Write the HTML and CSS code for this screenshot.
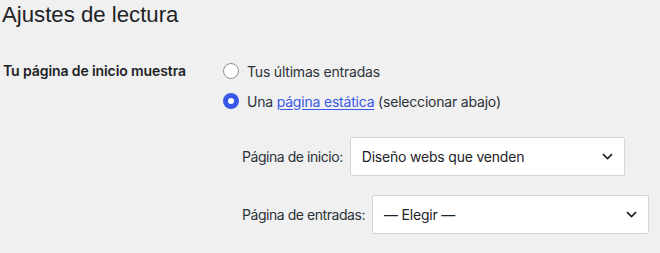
FILE: index.html
```html
<!DOCTYPE html>
<html lang="es">
<head>
<meta charset="utf-8">
<title>Ajustes de lectura</title>
<link rel="stylesheet" href="styles.css">
</head>
<body>
<h1 class="title">Ajustes de lectura</h1>
<div class="row">
  <div class="row-label">Tu página de inicio muestra</div>
  <div class="row-field">
    <label class="radio"><span class="radio-dot"></span><span>Tus últimas entradas</span></label>
    <label class="radio"><span class="radio-dot checked"></span><span>Una <a href="#" class="link">página estática</a> (seleccionar abajo)</span></label>
    <ul class="pages">
      <li class="page-item">
        <span class="page-label">Página de inicio:</span>
        <div class="select select-home"><span>Diseño webs que venden</span>
          <svg class="chevron" width="11" height="7" viewBox="0 0 11 7"><path d="M1 1.2 L5.5 5.5 L10 1.2" fill="none" stroke="#1d2327" stroke-width="1.7"/></svg>
        </div>
      </li>
      <li class="page-item">
        <span class="page-label">Página de entradas:</span>
        <div class="select select-posts"><span>— Elegir —</span>
          <svg class="chevron" width="11" height="7" viewBox="0 0 11 7"><path d="M1 1.2 L5.5 5.5 L10 1.2" fill="none" stroke="#1d2327" stroke-width="1.7"/></svg>
        </div>
      </li>
    </ul>
  </div>
</div>
</body>
</html>
```
FILE: styles.css
```css
html, body {
  margin: 0;
  padding: 0;
  background: #f0f0f1;
}
body {
  padding-left: 2px;
  font-family: Inter, "Liberation Sans", sans-serif;
  color: #1d2327;
  font-size: 14px;
  letter-spacing: -0.2px;
}
.title {
  margin: 0;
  font-family: "Liberation Sans", Arial, sans-serif;
  font-size: 22.2px;
  font-weight: 400;
  letter-spacing: 0;
  line-height: 30px;
  color: #1d2327;
}
.row {
  display: flex;
  margin-top: 26px;
}
.row-label {
  width: 220px;
  padding-left: 1px;
  font-weight: 600;
  letter-spacing: -0.1px;
  line-height: 30px;
  height: 30px;
}
.row-field {
  display: flex;
  flex-direction: column;
}
.radio {
  display: flex;
  align-items: center;
  gap: 8px;
  height: 30px;
  color: #2c3338;
}
.radio-dot {
  box-sizing: border-box;
  width: 16px;
  height: 16px;
  border-radius: 50%;
  border: 1px solid #8c8f94;
  background: #fff;
}
.radio-dot.checked {
  border: 5px solid #3858e9;
}
.link {
  color: #3858e9;
  text-decoration: underline;
  text-underline-offset: 2px;
}
.pages {
  list-style: none;
  margin: 21px 0 0 0;
  padding: 0 0 0 19px;
  display: flex;
  flex-direction: column;
  gap: 19px;
}
.page-item {
  display: flex;
  align-items: center;
  gap: 7px;
}
.page-label {
  color: #2c3338;
  letter-spacing: -0.45px;
}
.select {
  box-sizing: border-box;
  height: 39px;
  background: #fff;
  border: 1px solid #d4d4d7;
  border-radius: 2px;
  display: flex;
  align-items: center;
  justify-content: space-between;
  padding: 0 11px 0 11px;
  color: #1d2327;
}
.select-home { width: 275px; }
.select-posts { width: 277px; }
.chevron { display: block; }
```
